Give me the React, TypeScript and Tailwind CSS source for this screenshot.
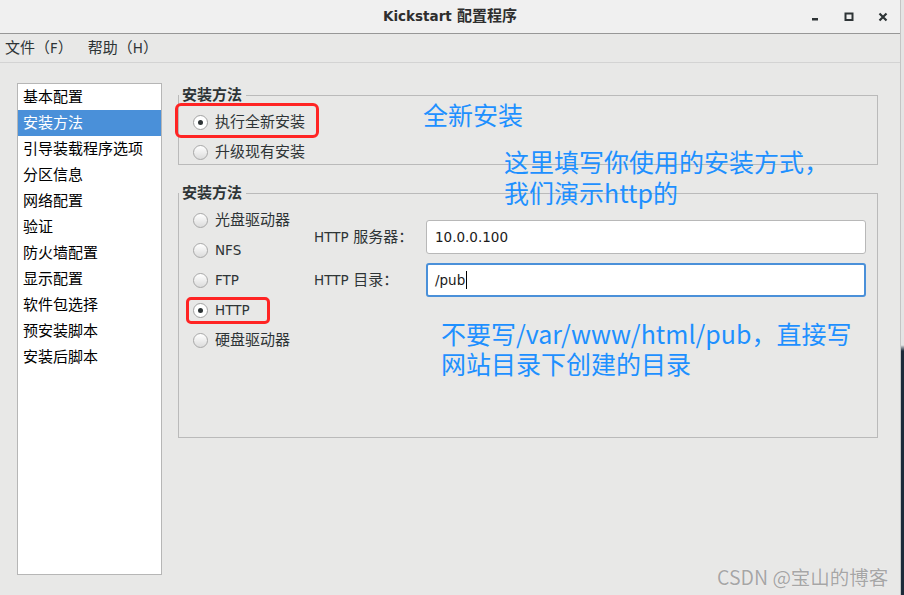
import React from "react"

// Sidebar sections of the Kickstart configurator
const SECTIONS = [
  "基本配置",
  "安装方法",
  "引导装载程序选项",
  "分区信息",
  "网络配置",
  "验证",
  "防火墙配置",
  "显示配置",
  "软件包选择",
  "预安装脚本",
  "安装后脚本",
]

const METHODS = [
  { label: "光盘驱动器", latin: false },
  { label: "NFS", latin: true },
  { label: "FTP", latin: true },
  { label: "HTTP", latin: true, checked: true },
  { label: "硬盘驱动器", latin: false },
]

function Lat({ children }: { children: React.ReactNode }) {
  return <span className="font-['DejaVu_Sans',sans-serif] text-[13.5px]">{children}</span>
}

function Radio({ checked = false, children }: { checked?: boolean; children: React.ReactNode }) {
  return (
    <div className="flex h-6 items-center gap-[7px] text-[#2e3436]">
      {checked ? (
        <span className="flex h-[15px] w-[15px] items-center justify-center rounded-full border border-[#a1a1a1] bg-white">
          <span className="h-[5px] w-[5px] rounded-full bg-[#2e3436]" />
        </span>
      ) : (
        <span className="h-[15px] w-[15px] rounded-full border border-[#a8a8a8] bg-linear-to-b from-white to-[#dcdcdc]" />
      )}
      <span className="leading-none">{children}</span>
    </div>
  )
}

function Legend({ children }: { children: React.ReactNode }) {
  return (
    <legend className="pl-[3px] pr-[4px] text-[15px] font-bold leading-[18px] text-[#2e3436]">{children}</legend>
  )
}

export default function App() {
  return (
    <div className="relative flex h-[595px] w-[904px] overflow-hidden bg-[#e8e8e7] text-[15px] font-['DejaVu_Sans','Noto_Sans_CJK_SC',sans-serif]">
      {/* window */}
      <div className="flex w-[901px] flex-col border-r border-[#c4c4c4]">
        {/* title bar */}
        <div className="grid h-[34px] grid-cols-[1fr_auto_1fr] items-center border-b border-[#979797] bg-[#f0f0f0] text-[#2e2e2e]">
          <div />
          <div className="font-bold">
            <Lat>Kickstart</Lat> 配置程序
          </div>
          <div className="flex justify-end">
            <div className="flex h-[33px] w-[34px] items-center justify-center">
              <svg width="8" height="10" viewBox="0 0 8 10">
                <rect x="1" y="6" width="6" height="2.5" fill="#2e3436" />
              </svg>
            </div>
            <div className="flex h-[33px] w-[34px] items-center justify-center">
              <svg width="10" height="10" viewBox="0 0 10 10">
                <rect x="1.5" y="1.5" width="7" height="6.5" fill="none" stroke="#2e3436" strokeWidth="2" />
              </svg>
            </div>
            <div className="flex h-[33px] w-[34px] items-center justify-center">
              <svg width="10" height="10" viewBox="0 0 10 10">
                <path d="M1.5 1.5 L8.5 8.5 M8.5 1.5 L1.5 8.5" stroke="#2e3436" strokeWidth="2.2" />
              </svg>
            </div>
          </div>
        </div>

        {/* menu bar */}
        <div className="flex h-[29px] items-center gap-[15px] border-b border-[#d3d3d3] pl-[5px] text-[#2e3436]">
          <span>文件（<Lat>F</Lat>）</span>
          <span>帮助（<Lat>H</Lat>）</span>
        </div>

        {/* body */}
        <div className="flex flex-1 gap-4 px-[17px] py-5">
          <div className="w-[145px] border border-[#b6b6b6] bg-white">
            {SECTIONS.map((s) => (
              <div
                key={s}
                className={
                  s === "安装方法"
                    ? "h-[26px] bg-[#4a90d9] pl-[5px] leading-[26px] text-white"
                    : "h-[26px] pl-[5px] leading-[26px] text-black"
                }
              >
                {s}
              </div>
            ))}
          </div>

          <div className="w-[700px] pt-[3px]">
            <fieldset className="border border-[#bababa]">
              <Legend>安装方法</Legend>
              <div className="flex flex-col gap-[6px] pl-[14px] pt-[6px]">
                <Radio checked>执行全新安装</Radio>
                <Radio>升级现有安装</Radio>
              </div>
            </fieldset>

            <fieldset className="mt-[19px] h-[254px] border border-[#bababa]">
              <Legend>安装方法</Legend>
              <div className="flex items-start">
                <div className="flex w-[135px] flex-col gap-[6px] pl-[14px] pt-[6px]">
                  {METHODS.map((m) => (
                    <Radio key={m.label} checked={m.checked}>
                      {m.latin ? <Lat>{m.label}</Lat> : m.label}
                    </Radio>
                  ))}
                </div>
                <div className="grid grid-cols-[112px_440px] content-start items-center gap-y-[9px] pt-[18px] text-[#2e3436]">
                  <span>
                    <Lat>HTTP</Lat> 服务器：
                  </span>
                  <div className="flex h-[34px] items-center rounded-[3px] border border-[#b8b8b8] bg-white px-2 text-[#1a1a1a]">
                    <Lat>10.0.0.100</Lat>
                  </div>
                  <span>
                    <Lat>HTTP</Lat> 目录：
                  </span>
                  <div className="flex h-[34px] items-center rounded-[3px] border-2 border-[#4a90d9] bg-white px-[7px] text-[#1a1a1a]">
                    <Lat>/pub</Lat>
                    <span className="ml-px h-[18px] w-px bg-black" />
                  </div>
                </div>
              </div>
            </fieldset>
          </div>
        </div>
      </div>
      <div className="flex-1 bg-linear-to-b from-[#e4e4e4] from-[58%] to-[#1c2a39] to-[59%]" />

      {/* screenshot annotations */}
      <div className="absolute left-[175px] top-[103px] h-[35px] w-[144px] rounded-[6px] border-[3px] border-[#ff2424]" />
      <div className="absolute left-[186px] top-[297px] h-[27px] w-[84px] rounded-[5px] border-[3px] border-[#ff2424]" />

      <div className="absolute left-[423px] top-[102px] text-[25px] leading-none text-[#1e90ff] font-['Noto_Sans_CJK_SC',sans-serif]">
        全新安装
      </div>
      <div className="absolute left-[504px] top-[146px] text-[25px] leading-[31px] text-[#1e90ff] font-['Noto_Sans_CJK_SC',sans-serif]">
        这里填写你使用的安装方式，
        <br />
        我们演示http的
      </div>
      <div className="absolute left-[441px] top-[318px] text-[25px] leading-[30px] text-[#1e90ff] font-['Noto_Sans_CJK_SC',sans-serif]">
        不要写/var/www/html/pub，直接写
        <br />
        网站目录下创建的目录
      </div>

      <div className="absolute left-[717px] top-[563px] text-[19.5px] leading-[28px] text-[#a6a6a6] [text-shadow:0_0_1px_#ffffff] font-['Noto_Sans_CJK_SC',sans-serif]">
        CSDN @宝山的博客
      </div>
    </div>
  )
}
